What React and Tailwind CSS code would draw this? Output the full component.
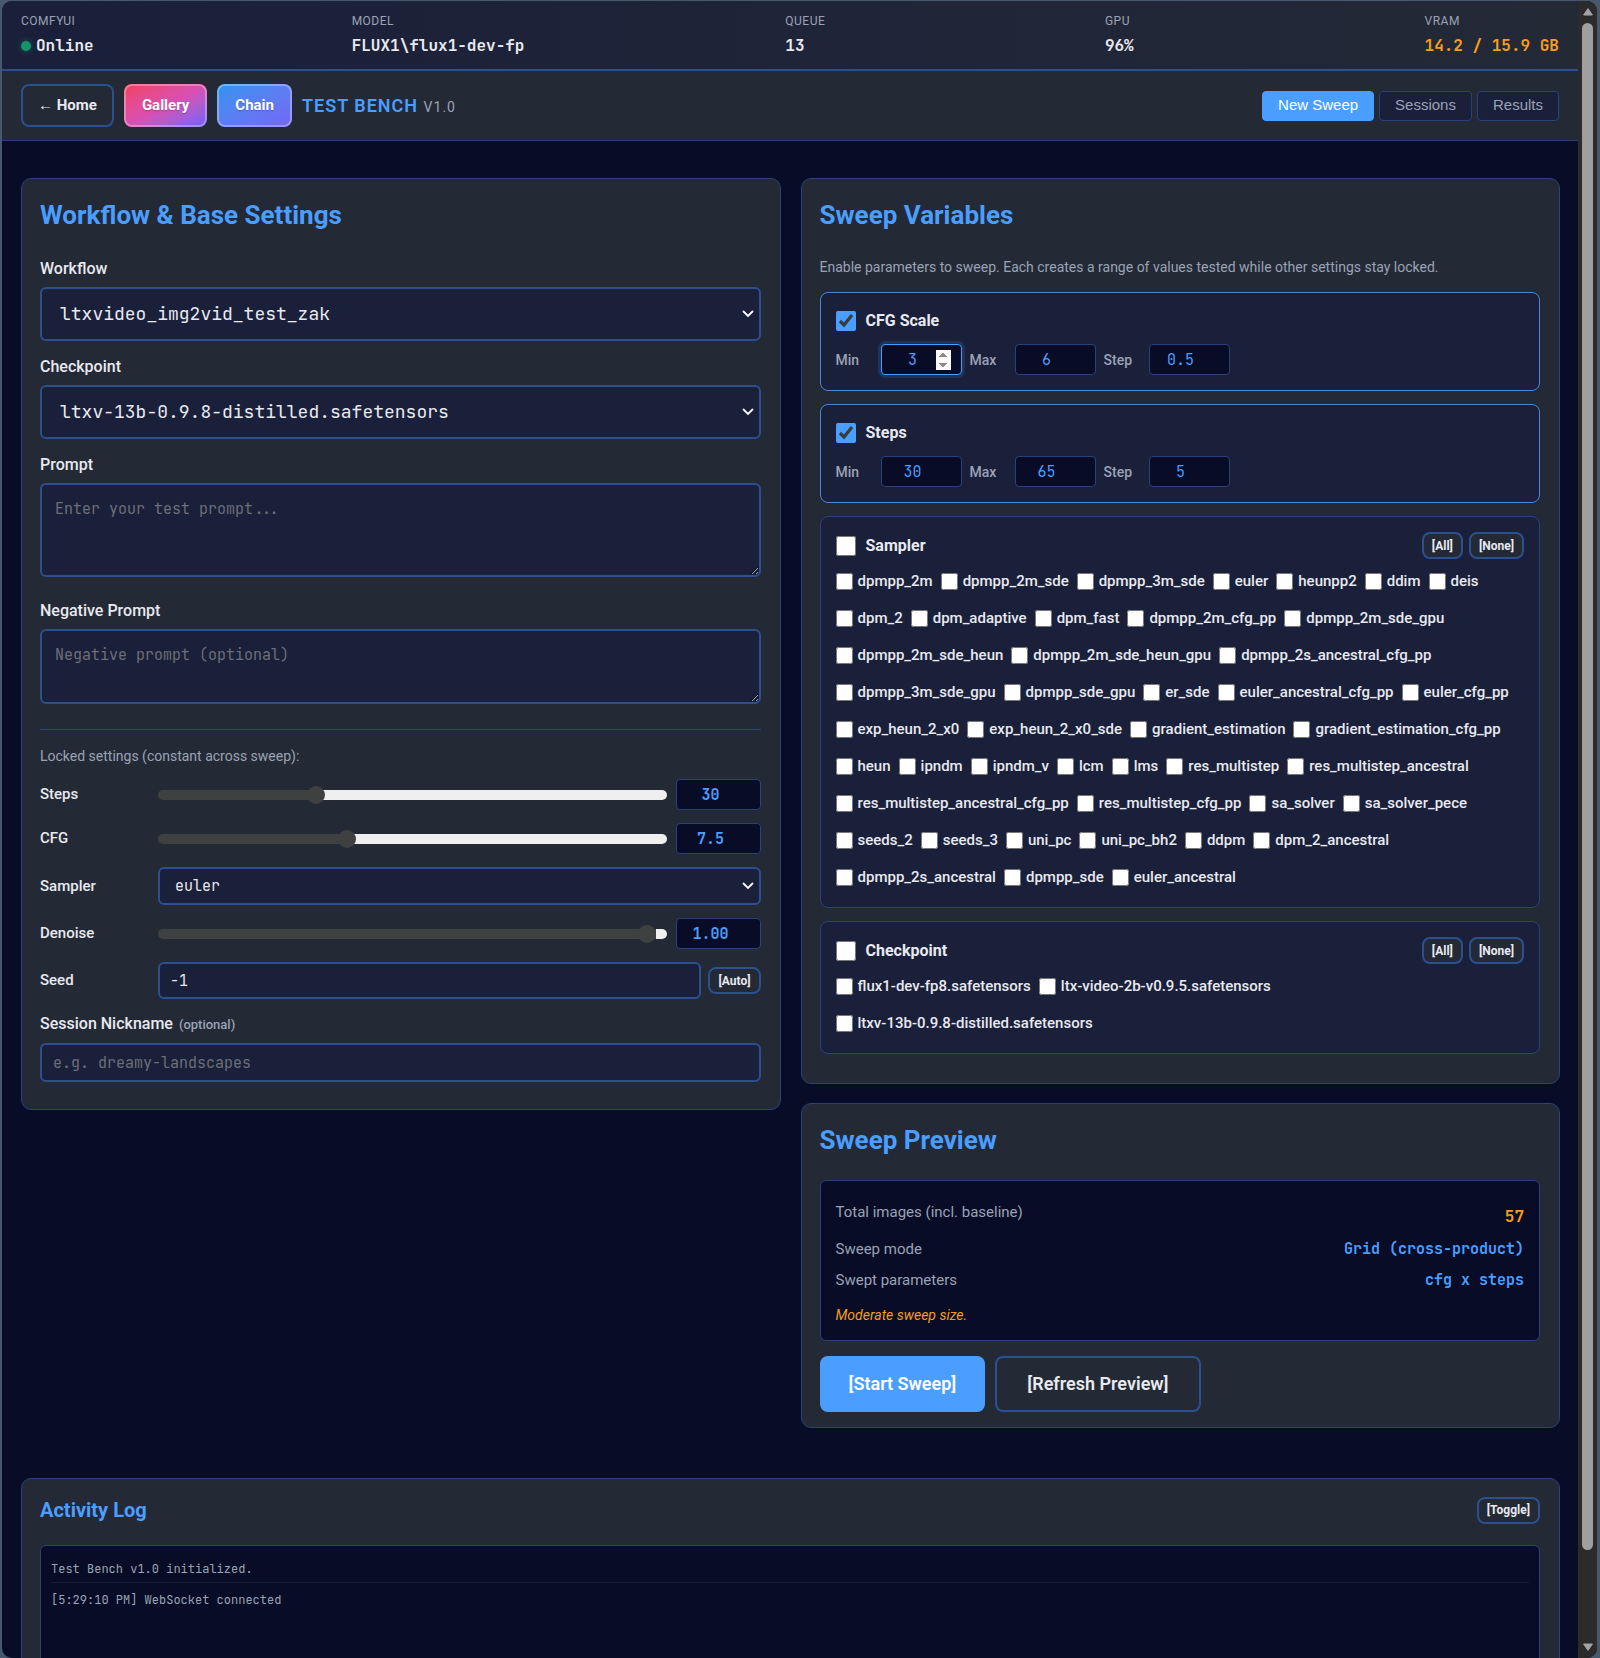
import React, { useState } from "react";

const status = [
  { label: "ComfyUI", value: "Online", online: true, width: "w-[91px]" },
  { label: "Model", value: "FLUX1\\flux1-dev-fp", width: "w-[194px]" },
  { label: "Queue", value: "13", width: "w-20" },
  { label: "GPU", value: "96%", width: "w-20" },
  { label: "VRAM", value: "14.2 / 15.9 GB", warn: true },
];

const tabs = ["New Sweep", "Sessions", "Results"];

const samplers = [
  "dpmpp_2m", "dpmpp_2m_sde", "dpmpp_3m_sde", "euler", "heunpp2", "ddim", "deis",
  "dpm_2", "dpm_adaptive", "dpm_fast", "dpmpp_2m_cfg_pp", "dpmpp_2m_sde_gpu",
  "dpmpp_2m_sde_heun", "dpmpp_2m_sde_heun_gpu", "dpmpp_2s_ancestral_cfg_pp",
  "dpmpp_3m_sde_gpu", "dpmpp_sde_gpu", "er_sde", "euler_ancestral_cfg_pp", "euler_cfg_pp",
  "exp_heun_2_x0", "exp_heun_2_x0_sde", "gradient_estimation", "gradient_estimation_cfg_pp",
  "heun", "ipndm", "ipndm_v", "lcm", "lms", "res_multistep", "res_multistep_ancestral",
  "res_multistep_ancestral_cfg_pp", "res_multistep_cfg_pp", "sa_solver", "sa_solver_pece",
  "seeds_2", "seeds_3", "uni_pc", "uni_pc_bh2", "ddpm", "dpm_2_ancestral",
  "dpmpp_2s_ancestral", "dpmpp_sde", "euler_ancestral",
];

const checkpoints = [
  "flux1-dev-fp8.safetensors",
  "ltx-video-2b-v0.9.5.safetensors",
  "ltxv-13b-0.9.8-distilled.safetensors",
];

const mono = "font-['JetBrains_Mono','DejaVu_Sans_Mono',monospace]";
const field = `${mono} block w-full rounded-md border-2 border-[#2c4f8f] bg-[#1a1f3a] text-[#e8eaf0] placeholder:text-[#6c7078] outline-none`;
const numberField = `${mono} h-[31px] rounded border border-[#2a4279] bg-[#080c26] text-center text-[15px] text-[#4a9eff] outline-none focus:border-[#4a9eff] focus:shadow-[0_0_0_3px_rgba(74,158,255,0.15)]`;

const Card = ({ title, children, className = "" }) => (
  <section className={`rounded-[10px] border border-[#2a4279] bg-[#242936] pr-[19px] pl-[18px] ${className}`}>
    <h2 className="mt-[18px] text-[26px] leading-9 font-bold text-[#4a9eff]">{title}</h2>
    {children}
  </section>
);

const SmallButton = ({ children }) => (
  <button className="h-[27px] rounded-lg border-2 border-[#2c4f8f] bg-[#242936] px-2 text-xs font-bold text-[#e8eaf0]">
    {children}
  </button>
);

const Select = ({ id, option, className }) => (
  <div className="relative w-full">
    <select id={id} className={`${field} appearance-none ${className}`}>
      <option>{option}</option>
    </select>
    <svg className="pointer-events-none absolute top-1/2 right-[7px] -mt-1 h-[8px] w-[12px]" viewBox="0 0 12 8" fill="none" stroke="#fff" strokeWidth="1.8" strokeLinecap="round">
      <path d="M1.5 1.5 6 6l4.500-4.500" />
    </svg>
  </div>
);

const SliderRow = ({ id, label, value, level }) => {
  const [pos, setPos] = useState(level);
  return (
    <div className="mb-[13px] flex items-center">
      <label htmlFor={id} className="w-[118px] text-[15px] font-medium">{label}</label>
      <input
        id={id}
        type="range"
        min="0"
        max="100"
        step="0.1"
        value={pos}
        onChange={(e) => setPos(Number(e.target.value))}
        style={{ background: `linear-gradient(to right, #3f4040 ${pos}%, #efefef ${pos}%)` }}
        className="h-[10px] min-w-0 flex-1 appearance-none rounded-full [&::-webkit-slider-thumb]:size-[18px] [&::-webkit-slider-thumb]:appearance-none [&::-webkit-slider-thumb]:rounded-full [&::-webkit-slider-thumb]:bg-[#3f4040]"
      />
      <input type="number" step="any" aria-label={`${label} value`} defaultValue={value} className={`${numberField} ml-[9px] w-[85px] px-2 font-semibold`} />
    </div>
  );
};

// Rango numérico: mínimo, máximo y paso
const RangePanel = ({ id, title, min, max, step, focused }) => (
  <div className="mb-[13px] rounded-lg border border-[#4a86d8] bg-[#1a1f3a] px-[15px] py-[15px]">
    <div className="mb-[10px] flex h-[26px] items-center gap-[10px]">
      <input id={id} type="checkbox" defaultChecked className="size-5 accent-[#4a9eff]" />
      <label htmlFor={id} className="text-base font-bold">{title}</label>
    </div>
    <div className="flex items-center gap-2">
      {[["Min", min], ["Max", max], ["Step", step]].map(([name, value]) => (
        <React.Fragment key={name}>
          <label htmlFor={`${id}-${name}`} className="w-[37px] text-sm font-medium text-[#9aa3b5]">{name}</label>
          <input
            id={`${id}-${name}`}
            type="number"
            step="any"
            defaultValue={value}
            autoFocus={focused && name === "Min"}
            className={`${numberField} w-[81px] pr-[10px] pl-2 focus:[&::-webkit-inner-spin-button]:opacity-100`}
          />
        </React.Fragment>
      ))}
    </div>
  </div>
);

const ListPanel = ({ id, title, items, className = "" }) => (
  <div className={`rounded-lg border border-[#2a4279] bg-[#1a1f3a] px-[15px] pt-[15px] pb-[11px] ${className}`}>
    <div className="flex h-[27px] items-center gap-[6px]">
      <input id={id} type="checkbox" className="mr-1 size-5 accent-[#4a9eff]" />
      <label htmlFor={id} className="mr-auto text-base font-bold">{title}</label>
      <SmallButton>[All]</SmallButton>
      <SmallButton>[None]</SmallButton>
    </div>
    <div className="mt-1 flex flex-wrap gap-x-2">
      {items.map((item) => (
        <label key={item} className="flex h-[37px] items-center gap-[5px] text-[15px] font-medium">
          <input type="checkbox" className="size-[17px] accent-[#4a9eff]" />
          {item}
        </label>
      ))}
    </div>
  </div>
);

const PreviewRow = ({ label, value, valueClass = "text-[15px] text-[#4a9eff]" }) => (
  <div className="flex justify-between">
    <span className="text-[15px] text-[#9aa3b5]">{label}</span>
    <span className={`${mono} font-semibold ${valueClass}`}>{value}</span>
  </div>
);

const App = () => {
  const [tab, setTab] = useState("New Sweep");

  return (
    <div className="h-screen overflow-hidden bg-[#48586c] pt-px pr-[3px] pl-[2px] font-[Roboto,sans-serif] text-[#e8eaf0]">
      <div className="flex h-full overflow-hidden rounded-[10px] bg-[#080c26]">
        <div className="min-w-0 flex-1 overflow-hidden">
          {/* Barra de estado */}
          <header className="flex h-[70px] justify-between border-b-2 border-[#2c4f8f] bg-linear-to-r from-[#1a1f3a] to-[#242936] px-[19px] pt-[11px]">
            {status.map((s) => (
              <div key={s.label} className={s.width}>
                <div className="text-xs leading-[18px] tracking-[0.5px] text-[#9aa3b5] uppercase">{s.label}</div>
                <div className={`${mono} mt-1 flex items-center gap-[5px] text-base leading-6 font-semibold whitespace-nowrap ${s.warn ? "text-[#f59e1b]" : ""}`}>
                  {s.online && <span className="size-[10px] rounded-full bg-[#15936a] shadow-[0_0_6px_rgba(16,185,129,0.4)]" />}
                  {s.value}
                </div>
              </div>
            ))}
          </header>

          {/* Navegación */}
          <nav className="flex h-[70px] items-center justify-between border-b border-[#2a4279] bg-[#242936] px-[19px]">
            <div className="flex items-center gap-[10px] text-[15px] font-bold">
              <a href="#home" className="flex h-[43px] items-center rounded-lg border-2 border-[#2c4f8f] px-[15px]">← Home</a>
              <a href="#gallery" className="flex h-[43px] items-center rounded-lg border-2 border-white/30 bg-linear-to-br from-[#f43f5e] via-[#d94fb0] to-[#6d5cff] bg-origin-border px-4 text-white text-shadow-sm">Gallery</a>
              <a href="#chain" className="flex h-[43px] items-center rounded-lg border-2 border-white/30 bg-linear-to-br from-[#2a94f0] to-[#7466f4] bg-origin-border px-4 text-white text-shadow-sm">Chain</a>
              <h1 className="text-lg font-semibold tracking-[1px] text-[#4a9eff] uppercase">
                Test Bench <span className="text-sm font-normal text-[#9aa3b5]">v1.0</span>
              </h1>
            </div>
            <div className="flex gap-[5px] font-['Liberation_Sans',sans-serif] text-[15px]">
              {tabs.map((t) => (
                <button
                  key={t}
                  onClick={() => setTab(t)}
                  className={`h-[30px] rounded border px-[15px] ${tab === t ? "border-[#4a9eff] bg-[#4a9eff] text-white" : "border-[#2a4279] bg-[#1a1f3a] text-[#9aa3b5]"}`}
                >
                  {t}
                </button>
              ))}
            </div>
          </nav>

          <main className="grid grid-cols-2 items-start gap-5 pt-[37px] pr-[18px] pl-[19px]">
            <Card title="Workflow & Base Settings" className="pb-[27px]">
              <label htmlFor="workflow" className="mt-6 mb-[6px] block text-base leading-6 font-medium">Workflow</label>
              <Select id="workflow" option="ltxvideo_img2vid_test_zak" className="h-[54px] px-[18px] text-lg" />
              <label htmlFor="checkpoint" className="mt-[14px] mb-[6px] block text-base leading-6 font-medium">Checkpoint</label>
              <Select id="checkpoint" option="ltxv-13b-0.9.8-distilled.safetensors" className="h-[54px] px-[18px] text-lg" />
              <label htmlFor="prompt" className="mt-[14px] mb-[6px] block text-base leading-6 font-medium">Prompt</label>
              <textarea id="prompt" placeholder="Enter your test prompt..." className={`${field} h-[94px] px-[13px] py-[13px] text-[15px]`} />
              <label htmlFor="negative" className="mt-[22px] mb-[6px] block text-base leading-6 font-medium">Negative Prompt</label>
              <textarea id="negative" placeholder="Negative prompt (optional)" className={`${field} h-[75px] px-[13px] py-[13px] text-[15px]`} />

              <p className="mt-[25px] mb-[13px] border-t border-[#2a4279] pt-4 text-sm leading-5 text-[#9aa3b5]">
                Locked settings (constant across sweep):
              </p>
              <SliderRow id="steps" label="Steps" value="30" level={30.4} />
              <SliderRow id="cfg" label="CFG" value="7.5" level={36.7} />
              <div className="mb-[13px] flex items-center">
                <label htmlFor="sampler" className="w-[118px] shrink-0 text-[15px] font-medium">Sampler</label>
                <Select id="sampler" option="euler" className="h-[38px] px-[15px] text-[15px]" />
              </div>
              <SliderRow id="denoise" label="Denoise" value="1.00" level={97.8} />
              <div className="flex items-center">
                <label htmlFor="seed" className="w-[118px] shrink-0 text-[15px] font-medium">Seed</label>
                <input id="seed" type="text" defaultValue="-1" className={`${field} mr-[7px] h-[37px] min-w-0 flex-1 px-[10px] text-[15px]`} />
                <SmallButton>[Auto]</SmallButton>
              </div>
              <label htmlFor="nickname" className="mt-[13px] mb-[6px] block text-base leading-6 font-medium">
                Session Nickname <small className="ml-[2px] text-[13px] text-[#9aa3b5]">(optional)</small>
              </label>
              <input id="nickname" type="text" placeholder="e.g. dreamy-landscapes" className={`${field} h-[39px] px-[11px] text-[15px]`} />
            </Card>

            <div>
              <Card title="Sweep Variables" className="pb-[29px]">
                <p className="mt-[24px] mb-[15px] text-sm leading-5 text-[#9aa3b5]">
                  Enable parameters to sweep. Each creates a range of values tested while other settings stay locked.
                </p>
                <RangePanel id="sweep-cfg" title="CFG Scale" min="3" max="6" step="0.5" focused />
                <RangePanel id="sweep-steps" title="Steps" min="30" max="65" step="5" />
                <ListPanel id="sweep-sampler" title="Sampler" items={samplers} className="mb-[13px]" />
                <ListPanel id="sweep-checkpoint" title="Checkpoint" items={checkpoints} />
              </Card>

              <Card title="Sweep Preview" className="mt-[19px] pb-[15px]">
                <div className="mt-[22px] flex flex-col gap-2 rounded-md border border-[#2a4279] bg-[#080c26] px-[15px] pt-5 pb-[15px]">
                  <PreviewRow label="Total images (incl. baseline)" value="57" valueClass="pt-1 pb-px text-base text-[#f59e1b]" />
                  <PreviewRow label="Sweep mode" value="Grid (cross-product)" />
                  <PreviewRow label="Swept parameters" value="cfg x steps" />
                  <p className="mt-[6px] text-sm text-[#f59e1b] italic">Moderate sweep size.</p>
                </div>
                <div className="mt-[15px] flex gap-[10px] text-lg font-semibold">
                  <button className="h-14 rounded-lg bg-[#4a9eff] px-[29px] text-white">[Start Sweep]</button>
                  <button className="h-14 rounded-lg border-2 border-[#2c4f8f] px-[30px]">[Refresh Preview]</button>
                </div>
              </Card>
            </div>
          </main>

          {/* Registro de actividad */}
          <section className="mt-[50px] mr-[18px] ml-[19px] rounded-[10px] border border-[#2a4279] bg-[#242936] pt-[17px] pr-[19px] pb-5 pl-[18px]">
            <div className="flex items-center justify-between">
              <h2 className="text-xl font-bold text-[#4a9eff]">Activity Log</h2>
              <SmallButton>[Toggle]</SmallButton>
            </div>
            <div className={`${mono} mt-[21px] min-h-[200px] rounded-md border border-[#2a4279] bg-[#080c26] px-[10px] pt-[10px] text-xs leading-[26px] text-[#9aa3b5]`}>
              <div className="mb-1 border-b border-[#151a38]">Test Bench v1.0 initialized.</div>
              <div>[5:29:10 PM] WebSocket connected</div>
            </div>
          </section>
        </div>

        {/* Barra de desplazamiento */}
        <div className="flex w-[19px] flex-col items-center bg-[#2b2b2b] py-[7px]" aria-hidden="true">
          <svg width="10" height="8" viewBox="0 0 10 8" fill="#a3a3a3"><path d="M5 0.6 9.4 7H0.6Z" stroke="#a3a3a3" strokeLinejoin="round" /></svg>
          <div className="mt-[7px] mb-[93px] w-[11px] flex-1 rounded-full bg-[#9f9f9f]" />
          <svg width="10" height="8" viewBox="0 0 10 8" fill="#a3a3a3"><path d="M5 7.4 9.4 1H0.6Z" stroke="#a3a3a3" strokeLinejoin="round" /></svg>
        </div>
      </div>
    </div>
  );
};

export default App;
